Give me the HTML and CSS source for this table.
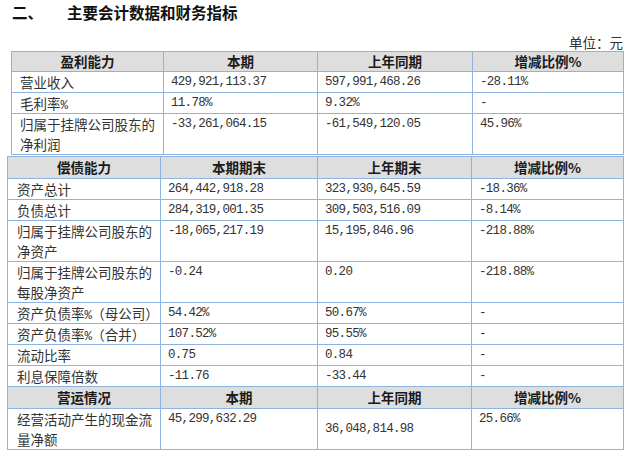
FILE: index.html
```html
<!DOCTYPE html>
<html lang="zh">
<head>
<meta charset="utf-8">
<link rel="stylesheet" href="styles.css">
</head>
<body>
<div class="page">
  <div class="title"><span class="no">二、</span><span>主要会计数据和财务指标</span></div>
  <div class="unit">单位：元</div>

  <table class="fin t1">
    <colgroup><col class="c1"><col class="c2"><col class="c3"><col class="c4"></colgroup>
    <tr class="head"><th>盈利能力</th><th>本期</th><th>上年同期</th><th>增减比例%</th></tr>
    <tr><td>营业收入</td><td class="num">429,921,113.37</td><td class="num">597,991,468.26</td><td class="num">-28.11%</td></tr>
    <tr><td>毛利率<span class="pct">%</span></td><td class="num">11.78%</td><td class="num">9.32%</td><td class="num">-</td></tr>
    <tr><td>归属于挂牌公司股东的<br>净利润</td><td class="num">-33,261,064.15</td><td class="num">-61,549,120.05</td><td class="num">45.96%</td></tr>
  </table>

  <table class="fin t2">
    <colgroup><col class="d1"><col class="d2"><col class="d3"><col class="d4"></colgroup>
    <tr class="head"><th>偿债能力</th><th>本期期末</th><th>上年期末</th><th>增减比例%</th></tr>
    <tr><td>资产总计</td><td class="num">264,442,918.28</td><td class="num">323,930,645.59</td><td class="num">-18.36%</td></tr>
    <tr><td>负债总计</td><td class="num">284,319,001.35</td><td class="num">309,503,516.09</td><td class="num">-8.14%</td></tr>
    <tr><td>归属于挂牌公司股东的<br>净资产</td><td class="num">-18,065,217.19</td><td class="num">15,195,846.96</td><td class="num">-218.88%</td></tr>
    <tr><td>归属于挂牌公司股东的<br>每股净资产</td><td class="num">-0.24</td><td class="num">0.20</td><td class="num">-218.88%</td></tr>
    <tr><td>资产负债率<span class="pct">%</span>（母公司）</td><td class="num">54.42%</td><td class="num">50.67%</td><td class="num">-</td></tr>
    <tr><td>资产负债率<span class="pct">%</span>（合并）</td><td class="num">107.52%</td><td class="num">95.55%</td><td class="num">-</td></tr>
    <tr><td>流动比率</td><td class="num">0.75</td><td class="num">0.84</td><td class="num">-</td></tr>
    <tr><td>利息保障倍数</td><td class="num">-11.76</td><td class="num">-33.44</td><td class="num">-</td></tr>
    <tr class="head"><th>营运情况</th><th>本期</th><th>上年同期</th><th>增减比例%</th></tr>
    <tr><td>经营活动产生的现金流<br>量净额</td><td class="num">45,299,632.29</td><td class="num mid">36,048,814.98</td><td class="num">25.66%</td></tr>
  </table>
</div>
</body>
</html>
```

FILE: styles.css
```css
html, body {
  margin: 0;
  background: #ffffff;
}
body {
  font-family: "Noto Sans CJK SC", sans-serif;
  color: #222222;
}
.page {
  padding-top: 2px;
}
.title {
  display: flex;
  height: 20px;
  line-height: 20px;
  padding-left: 12px;
  font-size: 15.5px;
  font-weight: bold;
  color: #111111;
}
.title .no {
  width: 55px;
}
.unit {
  margin-top: 11px;
  padding-right: 10px;
  text-align: right;
  font-size: 13.5px;
  line-height: 18px;
  color: #333333;
}
.fin {
  border-collapse: collapse;
  table-layout: fixed;
  font-size: 13.5px;
}
.fin.t1 {
  margin-left: 11px;
}
.fin.t2 {
  margin-left: 7px;
  margin-top: 1px;
}
.fin .c1 { width: 152px; }
.fin .c2 { width: 154px; }
.fin .c3 { width: 155px; }
.fin .c4 { width: 151px; }
.fin .d1 { width: 153px; }
.fin .d2 { width: 157px; }
.fin .d3 { width: 154px; }
.fin .d4 { width: 152px; }
.fin th, .fin td {
  border: 1px solid #8db4e0;
  padding: 0 0 0 7px;
  line-height: 20px;
  vertical-align: top;
  text-align: left;
  white-space: nowrap;
  overflow: hidden;
}
.fin th {
  padding: 0;
  text-align: center;
  vertical-align: middle;
  background: #dedede;
  font-weight: bold;
  color: #1a1a1a;
}
.fin.t1 .head th { height: 19px; line-height: 19px; }
.fin.t2 .head th { height: 21px; line-height: 21px; }
.fin td:first-child {
  padding-left: 8px;
  color: #333333;
}
.fin.t2 td:first-child {
  padding-left: 9px;
}
.fin .num {
  font-family: "Liberation Mono", monospace;
  font-size: 12.5px;
  letter-spacing: -0.7px;
  color: #333333;
}
.fin .num.mid {
  vertical-align: middle;
}
.pct {
  font-family: "Liberation Mono", monospace;
  font-size: 12.5px;
  letter-spacing: -0.7px;
  line-height: 1;
}
```
